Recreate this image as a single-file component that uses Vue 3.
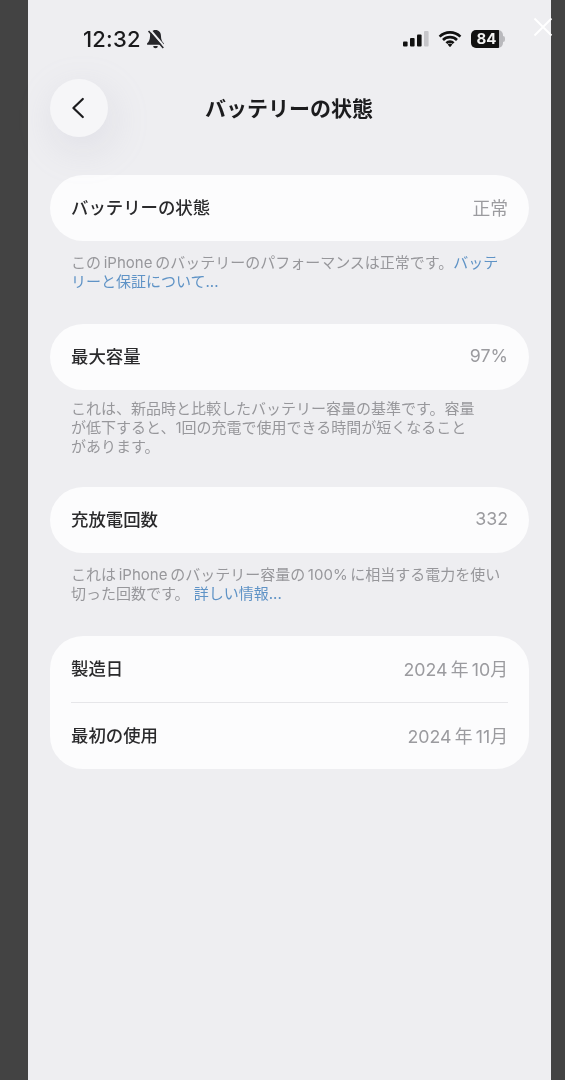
<script setup>
const sections = [
  {
    rows: [{ label: 'バッテリーの状態', value: '正常' }],
    lines: [
      [{ text: 'この\u2009iPhone\u2009のバッテリーのパフォーマンスは正常です。' }, { text: 'バッテ', link: true }],
      [{ text: 'リーと保証について...', link: true }],
    ],
  },
  {
    tight: true,
    rows: [{ label: '最大容量', value: '97%' }],
    lines: [
      [{ text: 'これは、新品時と比較したバッテリー容量の基準です。容量' }],
      [{ text: 'が低下すると、1回の充電で使用できる時間が短くなること' }],
      [{ text: 'があります。' }],
    ],
  },
  {
    rows: [{ label: '充放電回数', value: '332' }],
    lines: [
      [{ text: 'これは\u2009iPhone\u2009のバッテリー容量の\u2009100%\u2009に相当する電力を使い' }],
      [{ text: '切った回数です。 ' }, { text: '詳しい情報...', link: true }],
    ],
  },
  {
    rows: [
      { label: '製造日', value: '2024\u2009年\u200910月' },
      { label: '最初の使用', value: '2024\u2009年\u200911月' },
    ],
    lines: [],
  },
]
</script>

<template>
  <div class="page">
    <div class="screen">
      <div class="status">
        <div class="time">
          <span>12:32</span>
          <svg class="bell" viewBox="0 0 20 20" width="21" height="21">
            <path d="M10 1c-3.2 0-5.2 2.4-5.2 5.6 0 3.8-1.2 5.6-2.8 7v1.4h16v-1.4c-1.6-1.4-2.8-3.2-2.8-7C15.200 3.400 13.200 1 10 1z" fill="#26262a" />
            <path d="M7.800 16.200h4.400a2.200 2.200 0 0 1-4.400 0z" fill="#26262a" />
            <path d="M5 1L18.600 16.800" stroke="#eeeef1" stroke-width="2" />
            <path d="M3.400 1.800L17.400 18" stroke="#26262a" stroke-width="1.500" />
          </svg>
        </div>
        <div class="indicators">
          <svg viewBox="0 0 26 16" width="26" height="16">
            <rect x="0" y="10.500" width="4.600" height="5" rx="1" fill="#111" />
            <rect x="7" y="7" width="4.600" height="8.500" rx="1" fill="#111" />
            <rect x="14" y="3.500" width="4.600" height="12" rx="1" fill="#111" />
            <rect x="21" y="0" width="4.600" height="15.500" rx="1" fill="#c6c6ca" />
          </svg>
          <svg viewBox="0 0 24 16" width="24" height="16">
            <path d="M1.600 5.600a14.800 14.800 0 0 1 20.800 0M5 9a10 10 0 0 1 14 0M8.400 12.200a5 5 0 0 1 7.200 0" fill="none" stroke="#111" stroke-width="2.600" />
            <path d="M12 16.200l-2.400-2.600a3.400 3.400 0 0 1 4.800 0z" fill="#111" />
          </svg>
          <div class="battery">
            <div class="battery-body">84</div>
            <span class="battery-cap"></span>
          </div>
        </div>
      </div>

      <div class="header">
        <button class="back" type="button" aria-label="戻る">
          <svg viewBox="0 0 16 22" width="16" height="22">
            <path d="M12.800 2L3.400 11l9.400 9" fill="none" stroke="#1c1c1e" stroke-width="2.200" stroke-linecap="round" stroke-linejoin="round" />
          </svg>
        </button>
        <h1 class="title">バッテリーの状態</h1>
      </div>

      <div class="content">
        <section v-for="(section, i) in sections" :key="i" class="section">
          <div class="card">
            <div v-for="row in section.rows" :key="row.label" class="row">
              <span class="label">{{ row.label }}</span>
              <span class="value">{{ row.value }}</span>
            </div>
          </div>
          <div v-if="section.lines.length" class="note" :class="{ 'note-tight': section.tight }">
            <div v-for="(line, j) in section.lines" :key="j" class="note-line">
              <span v-for="(part, k) in line" :key="k" :class="{ link: part.link }">{{ part.text }}</span>
            </div>
          </div>
        </section>
      </div>
    </div>
    <svg class="close" viewBox="0 0 20 20" width="20" height="20">
      <path d="M1.500 1.500L18.500 18.500M18.500 1.500L1.500 18.500" stroke="#fff" stroke-width="1.800" />
    </svg>
  </div>
</template>

<style>
html, body { margin: 0; background: #434343; }
</style>

<style scoped>
.page {
  position: relative;
  width: 565px;
  height: 1080px;
  overflow: hidden;
  background: #434343;
  font-family: Inter, "Noto Sans CJK JP", sans-serif;
}
.screen {
  box-sizing: border-box;
  width: 523px;
  height: 1080px;
  margin-left: 28px;
  background: #eeeef1;
  filter: blur(0.55px);
}
.status {
  display: flex;
  justify-content: space-between;
  align-items: center;
  height: 26px;
  padding: 26px 46px 0 55px;
}
.time {
  display: flex;
  align-items: center;
  gap: 4px;
  font-size: 22px;
  font-weight: 500;
  letter-spacing: 0.2px;
  color: #1a1a1c;
}
.indicators {
  display: flex;
  align-items: center;
  gap: 9px;
}
.battery {
  display: flex;
  align-items: center;
}
.battery-body {
  width: 32px;
  height: 18px;
  border-radius: 5px;
  background: linear-gradient(90deg, #111 87%, #b9b9bd 87%);
  color: #f2f2f2;
  font-size: 15px;
  font-weight: 700;
  line-height: 18px;
  text-indent: -1px;
  text-align: center;
}
.battery-cap {
  width: 2px;
  height: 6px;
  border-radius: 0 2px 2px 0;
  background: #bcbcc0;
}
.header {
  position: relative;
  display: flex;
  align-items: center;
  justify-content: center;
  height: 58px;
  margin-top: 27px;
}
.back {
  position: absolute;
  left: 22px;
  top: 0;
  display: flex;
  align-items: center;
  justify-content: center;
  width: 58px;
  height: 58px;
  padding: 0 2px 0 0;
  border: 0;
  border-radius: 50%;
  background: #f6f6f8;
  box-shadow: 4px 12px 40px rgba(160, 160, 185, 0.2);
}
.title {
  margin: 0 0 3px -1px;
  font-size: 21px;
  font-weight: 600;
  color: #1c1c1e;
}
.content {
  display: flex;
  flex-direction: column;
  gap: 33px;
  padding: 37.5px 22px 0;
}
.card {
  padding: 0 21px;
  border-radius: 33px;
  background: #fcfcfd;
}
.row {
  box-sizing: border-box;
  display: flex;
  align-items: center;
  justify-content: space-between;
  height: 66.5px;
}
.row + .row { border-top: 1px solid #e6e6e9; }
.label {
  margin-top: -3px;
  font-size: 17.4px;
  font-weight: 500;
  color: #2a2a2c;
}
.value {
  margin-top: -2px;
  font-size: 17.8px;
  color: #9b9b9f;
}
.note {
  margin: 11.5px 0 0;
  padding-left: 21px;
  font-size: 15px;
  line-height: 19px;
  color: #97979b;
}
.note-tight {
  margin: 8.5px 0 -2px;
}
.note-line {
  height: 19px;
  white-space: pre;
}
.link { color: #5f93c6; }
.close {
  position: absolute;
  left: 533px;
  top: 17px;
}
</style>
